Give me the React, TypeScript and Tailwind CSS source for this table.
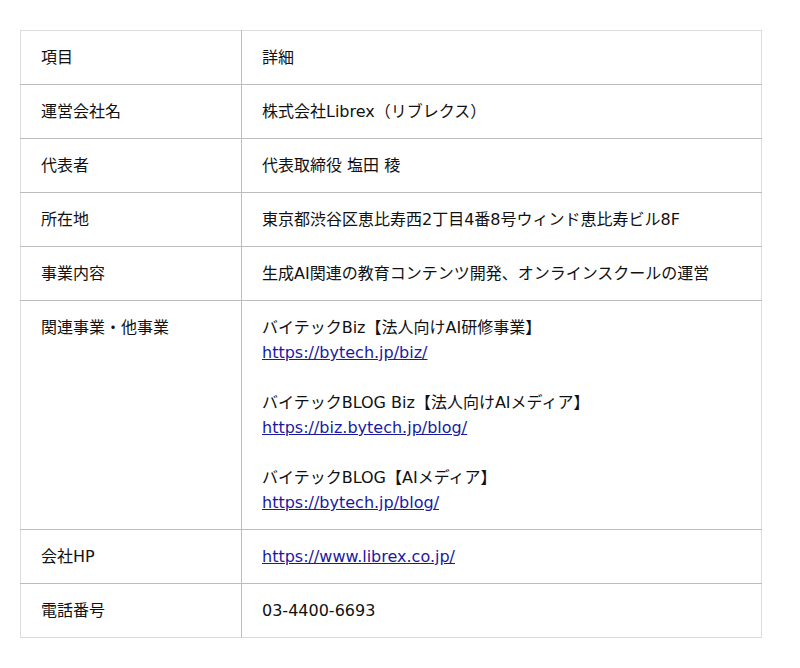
const rows: { label: string; value: React.ReactNode }[] = [
  { label: '運営会社名', value: '株式会社Librex（リブレクス）' },
  { label: '代表者', value: '代表取締役 塩田 稜' },
  { label: '所在地', value: '東京都渋谷区恵比寿西2丁目4番8号ウィンド恵比寿ビル8F' },
  { label: '事業内容', value: '生成AI関連の教育コンテンツ開発、オンラインスクールの運営' },
  {
    label: '関連事業・他事業',
    value: (
      <>
        バイテックBiz【法人向けAI研修事業】
        <br />
        <a href="#" className="text-[#1a1aa0] underline">https://bytech.jp/biz/</a>
        <br />
        <br />
        バイテックBLOG Biz【法人向けAIメディア】
        <br />
        <a href="#" className="text-[#1a1aa0] underline">https://biz.bytech.jp/blog/</a>
        <br />
        <br />
        バイテックBLOG【AIメディア】
        <br />
        <a href="#" className="text-[#1a1aa0] underline">https://bytech.jp/blog/</a>
      </>
    ),
  },
  {
    label: '会社HP',
    value: <a href="#" className="text-[#1a1aa0] underline">https://www.librex.co.jp/</a>,
  },
  { label: '電話番号', value: '03-4400-6693' },
];

export default function App() {
  return (
    <div className="bg-white min-h-[668px] pt-[30px] pl-[20px] font-['DejaVu_Sans','Noto_Sans_CJK_JP',sans-serif] text-[16px] leading-[25px] text-[#111]">
      <table className="w-[742px] border-collapse border border-[#dcdcdc]">
        <tbody>
          <tr>
            <td className="w-[221px] border-b border-r border-[#bdbdbd] px-5 py-[14px] align-top">項目</td>
            <td className="border-b border-[#bdbdbd] px-5 py-[14px] align-top">詳細</td>
          </tr>
          {rows.map((r, i) => (
            <tr key={r.label}>
              <td
                className={`border-r border-[#bdbdbd] px-5 py-[14px] align-top ${
                  i < rows.length - 1 ? 'border-b' : ''
                }`}
              >
                {r.label}
              </td>
              <td className={`border-[#bdbdbd] px-5 py-[14px] align-top ${i < rows.length - 1 ? 'border-b' : ''}`}>
                {r.value}
              </td>
            </tr>
          ))}
        </tbody>
      </table>
    </div>
  );
}
